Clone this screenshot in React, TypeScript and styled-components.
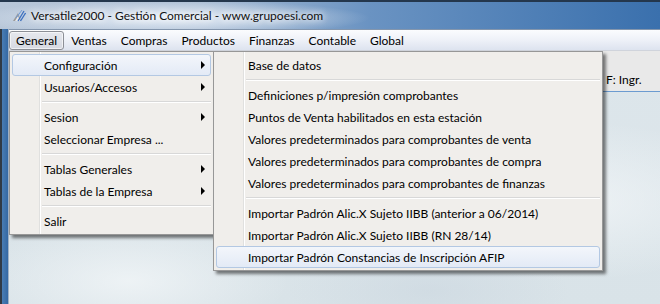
import React from 'react'
import styled, { createGlobalStyle } from 'styled-components'

const GlobalStyle = createGlobalStyle`
	html,
	body {
		margin: 0;
		padding: 0;
		width: 660px;
		height: 304px;
		overflow: hidden;
	}
	body {
		font-family: 'Lato', 'Liberation Sans', sans-serif;
		font-size: 12px;
		color: #000;
	}
`

const Window = styled.div`
	width: 660px;
	height: 304px;
	display: flex;
	flex-direction: column;
	background: #3c71ad;
`

const TitleBar = styled.div`
	height: 29px;
	box-sizing: border-box;
	border-top: 2px solid #24374d;
	display: flex;
	align-items: center;
	padding-left: 12px;
	gap: 5px;
	background: radial-gradient(ellipse 200px 18px at 170px 16px, rgba(235, 242, 250, 0.95), rgba(235, 242, 250, 0) 100%),
		linear-gradient(to right, #b8c7d9 0%, #a9bcd3 30%, #6a93c2 56%, #3a70ad 100%);
`

const Title = styled.span`
	font-size: 12px;
	color: #111;
	text-shadow: 0 0 6px #fff, 0 0 8px #fff;
`

const Body = styled.div`
	flex: 1;
	display: flex;
	min-height: 0;
`

const FrameEdge = styled.div`
	width: 9px;
	background: linear-gradient(to right, #303a46 0, #303a46 2px, #4a7db4 2px, #3468a3 8px, #9fb1c6 8px);
`

const Client = styled.div`
	flex: 1;
	display: flex;
	flex-direction: column;
	min-width: 0;
`

const MenuBar = styled.div`
	height: 20px;
	display: flex;
	align-items: center;
	border-top: 1px solid #8496ad;
	border-bottom: 1px solid #d0d4dc;
	background: linear-gradient(to bottom, #fbfcfe 0%, #eef1f8 50%, #dde3ef 100%);
`

const BarItem = styled.div<{ $open?: boolean }>`
	height: 17px;
	display: flex;
	align-items: center;
	padding: 0 6px;
	border: 1px solid ${p => (p.$open ? '#8c8f96' : 'transparent')};
	border-radius: 3px;
	background: ${p => (p.$open ? 'linear-gradient(to bottom, #e6e8ee, #d6d9e1)' : 'transparent')};
	box-shadow: ${p => (p.$open ? 'inset 0 0 0 1px rgba(255,255,255,0.6)' : 'none')};
`

const Workspace = styled.div`
	flex: 1;
	position: relative;
	display: flex;
	flex-direction: column;
	background: radial-gradient(ellipse 160px 60px at 120px 230px, rgba(242, 246, 248, 0.8), rgba(242, 246, 248, 0)),
		radial-gradient(ellipse 200px 80px at 560px 150px, rgba(245, 248, 250, 0.7), rgba(245, 248, 250, 0)),
		radial-gradient(ellipse 140px 50px at 420px 240px, rgba(200, 212, 222, 0.5), rgba(200, 212, 222, 0)),
		linear-gradient(to bottom, #dde6eb, #d9e3e8);
`

const InfoStrip = styled.div`
	height: 41px;
	box-sizing: border-box;
	display: flex;
	align-items: flex-end;
	padding: 0 0 4px 597px;
	background: #e9e9e9;
	border-bottom: 1px solid #6c9bd0;
`

const Menu = styled.div<{ $left: number; $width: number }>`
	position: absolute;
	top: 0;
	left: ${p => p.$left}px;
	width: ${p => p.$width}px;
	box-sizing: border-box;
	padding: 2px;
	border: 1px solid #979797;
	background: linear-gradient(
			to right,
			transparent 29px,
			#e0e0df 29px,
			#e0e0df 30px,
			#ffffff 30px,
			#ffffff 31px,
			transparent 31px
		),
		#f0eeeb;
	box-shadow: 3px 3px 3px rgba(0, 0, 0, 0.5);
	display: flex;
	flex-direction: column;
`

const Item = styled.div<{ $hot?: boolean }>`
	height: 22px;
	box-sizing: border-box;
	display: flex;
	align-items: center;
	justify-content: space-between;
	padding: 0 5px 0 31px;
	border: 1px solid ${p => (p.$hot ? '#b3c8e3' : 'transparent')};
	border-radius: 3px;
	background: ${p => (p.$hot ? 'linear-gradient(to bottom, #f3f6fb, #e3eaf6)' : 'transparent')};
	white-space: nowrap;
`

const Arrow = styled.span`
	width: 0;
	height: 0;
	border-top: 4px solid transparent;
	border-bottom: 4px solid transparent;
	border-left: 4px solid #000;
`

const Separator = styled.div`
	margin: 3px 0 3px 30px;
	border-top: 1px solid #d8d8d8;
	border-bottom: 1px solid #ffffff;
`

const AppIcon = () => (
	<svg width="14" height="13" viewBox="0 0 14 13">
		<polygon points="1,12 6,4 9,12" fill="#9a9a9a" />
		<polygon points="3,12 6,7 8,12" fill="#e8e8e8" />
		<line x1="6" y1="12" x2="12" y2="2" stroke="#3b6fc0" strokeWidth="1.3" />
		<line x1="8.5" y1="12" x2="13.5" y2="4" stroke="#3b6fc0" strokeWidth="1.3" />
		<line x1="4" y1="9" x2="10" y2="1" stroke="#6f9ad8" strokeWidth="1" />
	</svg>
)

type Entry = { label?: string; arrow?: boolean; hot?: boolean; sep?: boolean }

const generalMenu: Entry[] = [
	{ label: 'Configuración', arrow: true, hot: true },
	{ label: 'Usuarios/Accesos', arrow: true },
	{ sep: true },
	{ label: 'Sesion', arrow: true },
	{ label: 'Seleccionar Empresa ...' },
	{ sep: true },
	{ label: 'Tablas Generales', arrow: true },
	{ label: 'Tablas de la Empresa', arrow: true },
	{ sep: true },
	{ label: 'Salir' },
]

const configMenu: Entry[] = [
	{ label: 'Base de datos' },
	{ sep: true },
	{ label: 'Definiciones p/impresión comprobantes' },
	{ label: 'Puntos de Venta habilitados en esta estación' },
	{ label: 'Valores predeterminados para comprobantes de venta' },
	{ label: 'Valores predeterminados para comprobantes de compra' },
	{ label: 'Valores predeterminados para comprobantes de finanzas' },
	{ sep: true },
	{ label: 'Importar Padrón Alic.X Sujeto IIBB (anterior a 06/2014)' },
	{ label: 'Importar Padrón Alic.X Sujeto IIBB (RN 28/14)' },
	{ label: 'Importar Padrón Constancias de Inscripción AFIP', hot: true },
]

const MenuList = ({ entries, left, width }: { entries: Entry[]; left: number; width: number }) => (
	<Menu $left={left} $width={width}>
		{entries.map((e, i) =>
			e.sep ? (
				<Separator key={i} />
			) : (
				<Item key={i} $hot={e.hot}>
					<span>{e.label}</span>
					{e.arrow && <Arrow />}
				</Item>
			)
		)}
	</Menu>
)

const barItems = ['General', 'Ventas', 'Compras', 'Productos', 'Finanzas', 'Contable', 'Global']

export default function App() {
	return (
		<>
			<GlobalStyle />
			<Window>
				<TitleBar>
					<AppIcon />
					<Title>Versatile2000 - Gestión Comercial - www.grupoesi.com</Title>
				</TitleBar>
				<Body>
					<FrameEdge />
					<Client>
						<MenuBar>
							{barItems.map((b, i) => (
								<BarItem key={b} $open={i === 0}>
									{b}
								</BarItem>
							))}
						</MenuBar>
						<Workspace>
							<InfoStrip>F: Ingr.</InfoStrip>
							<MenuList entries={generalMenu} left={0} width={205} />
							<MenuList entries={configMenu} left={204} width={390} />
						</Workspace>
					</Client>
				</Body>
			</Window>
		</>
	)
}
